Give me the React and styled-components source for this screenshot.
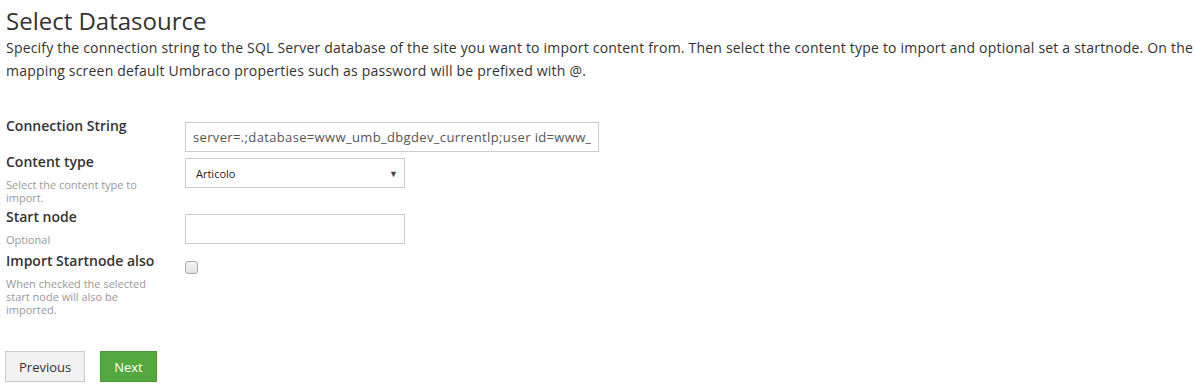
import React from 'react'
import styled, { createGlobalStyle } from 'styled-components'

const Global = createGlobalStyle`
  body {
    margin: 0;
    background: #fff;
    font-family: "Open Sans", "Liberation Sans", sans-serif;
    color: #333;
  }
`

const Page = styled.div`
  padding: 6px 0 0 6px;
`

const Title = styled.h1`
  margin: 0;
  font-size: 24px;
  font-weight: 400;
  line-height: 30px;
  color: #333;
`

const Intro = styled.p`
  margin: 0;
  font-size: 14px;
  line-height: 23px;
  letter-spacing: 0.2px;
  color: #333;
`

const Form = styled.div`
  margin-top: 34px;
`

const Row = styled.div`
  display: flex;
  align-items: flex-start;
  margin-bottom: ${p => p.$gap || 0}px;
`

const LabelCol = styled.div`
  width: 150px;
  flex: none;
  margin-right: 29px;
`

const Label = styled.label`
  display: block;
  font-size: 14px;
  font-weight: 600;
  line-height: 20px;
  color: #333;
`

const Help = styled.div`
  margin-top: 6px;
  font-size: 11px;
  line-height: 13px;
  color: #999;
`

const Control = styled.div`
  padding-top: ${p => p.$top || 6}px;
`

const TextInput = styled.input`
  box-sizing: border-box;
  display: block;
  width: ${p => p.$w}px;
  height: 30px;
  padding: 0 7px;
  border: 1px solid #ccc;
  border-radius: 0;
  font-family: "Open Sans", "Liberation Sans", sans-serif;
  font-size: 13px;
  letter-spacing: 0.35px;
  color: #555;
  outline: none;
`

const SelectBox = styled.div`
  position: relative;
  width: 220px;
`

const Select = styled.select`
  box-sizing: border-box;
  display: block;
  width: 100%;
  height: 30px;
  padding: 0 10px;
  border: 1px solid #ccc;
  border-radius: 0;
  background: #fff;
  appearance: none;
  font-family: "Open Sans", "Liberation Sans", sans-serif;
  font-size: 11px;
  color: #222;
  outline: none;
`

const Arrow = styled.span`
  position: absolute;
  right: 7px;
  top: 9px;
  font-size: 9px;
  color: #444;
  pointer-events: none;
`

const Check = styled.input`
  appearance: none;
  display: block;
  box-sizing: border-box;
  width: 13px;
  height: 13px;
  margin: 0;
  border: 1px solid #a9a9a9;
  border-radius: 3px;
  background: linear-gradient(#f4f4f4, #e2e2e2);
`

const Buttons = styled.div`
  display: flex;
  gap: 15px;
  margin-top: 35px;
  margin-left: -1px;
`

const Button = styled.button`
  box-sizing: border-box;
  height: 31px;
  padding: 0 13px;
  border: 1px solid ${p => (p.$primary ? '#4a9a38' : '#ccc')};
  border-radius: 0;
  background: ${p => (p.$primary ? '#53a93f' : '#f2f2f2')};
  color: ${p => (p.$primary ? '#fff' : '#333')};
  font-family: "Open Sans", "Liberation Sans", sans-serif;
  font-size: 13px;
  cursor: pointer;
`

export default function App() {
  return (
    <Page>
      <Global />
      <Title>Select Datasource</Title>
      <Intro>
        Specify the connection string to the SQL Server database of the site you want to import content from. Then select the content type to import and optional set a startnode. On the mapping screen default Umbraco properties such as password will be prefixed with @.
      </Intro>
      <Form>
        <Row>
          <LabelCol>
            <Label htmlFor="conn">Connection String</Label>
          </LabelCol>
          <Control>
            <TextInput id="conn" $w={414} defaultValue="server=.;database=www_umb_dbgdev_currentlp;user id=www_umb_dbgdev;password=secret" />
          </Control>
        </Row>
        <Row $gap={3}>
          <LabelCol>
            <Label htmlFor="ctype">Content type</Label>
            <Help>Select the content type to import.</Help>
          </LabelCol>
          <Control>
            <SelectBox>
              <Select id="ctype" defaultValue="Articolo">
                <option>Articolo</option>
              </Select>
              <Arrow>▼</Arrow>
            </SelectBox>
          </Control>
        </Row>
        <Row $gap={5}>
          <LabelCol>
            <Label htmlFor="start">Start node</Label>
            <Help>Optional</Help>
          </LabelCol>
          <Control $top={7}>
            <TextInput id="start" $w={220} />
          </Control>
        </Row>
        <Row>
          <LabelCol>
            <Label htmlFor="also">Import Startnode also</Label>
            <Help>When checked the selected start node will also be imported.</Help>
          </LabelCol>
          <Control $top={10}>
            <Check type="checkbox" id="also" />
          </Control>
        </Row>
      </Form>
      <Buttons>
        <Button>Previous</Button>
        <Button $primary>Next</Button>
      </Buttons>
    </Page>
  )
}
